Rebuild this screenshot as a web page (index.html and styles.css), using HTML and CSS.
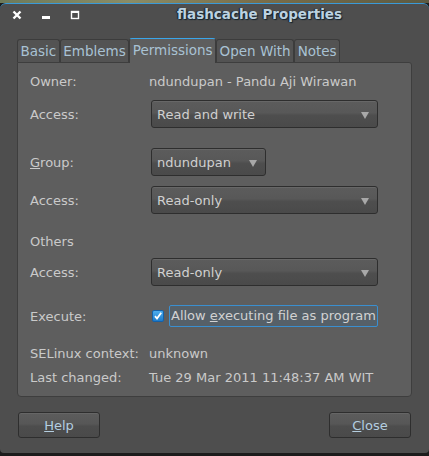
FILE: index.html
```html
<!DOCTYPE html>
<html lang="en-US">

<head>
    <meta charset="UTF-8">
    <meta name="viewport" content="width=device-width, initial-scale=1.0">
    <title>flashcache Properties</title>
    <link rel="stylesheet" href="styles.css">
</head>

<body>
    <div class="wallpaper"></div>
    <div class="window">
        <div class="titlebar">
            <div class="controls">
                <svg class="ctl" width="10" height="10" viewBox="0 0 10 10">
                    <path d="M1.5 1.5 L8.5 8.5 M8.5 1.5 L1.5 8.5" stroke="#fff" stroke-width="2.4" />
                </svg>
                <svg class="ctl" width="10" height="10" viewBox="0 0 10 10">
                    <rect x="1" y="6" width="8" height="3" fill="#fff" />
                </svg>
                <svg class="ctl" width="10" height="10" viewBox="0 0 10 10">
                    <rect x="1.5" y="1.5" width="7" height="7" fill="none" stroke="#fff" stroke-width="1.4" />
                    <rect x="1" y="1" width="8" height="2" fill="#fff" />
                </svg>
            </div>
            <div class="title">flashcache Properties</div>
        </div>

        <div class="tabs">
            <div class="tab">Basic</div>
            <div class="tab">Emblems</div>
            <div class="tab active">Permissions</div>
            <div class="tab">Open With</div>
            <div class="tab">Notes</div>
        </div>

        <div class="panel">
            <div class="row r-owner">
                <span class="label">Owner:</span>
                <span class="value">ndundupan - Pandu Aji Wirawan</span>
            </div>
            <div class="row r-combo r-access1">
                <span class="label">Access:</span>
                <div class="combo wide">Read and write<span class="arrow"></span></div>
            </div>
            <div class="row r-combo r-group">
                <span class="label"><u>G</u>roup:</span>
                <div class="combo narrow">ndundupan<span class="arrow"></span></div>
            </div>
            <div class="row r-combo r-access2">
                <span class="label">Access:</span>
                <div class="combo wide">Read-only<span class="arrow"></span></div>
            </div>
            <div class="row r-others">
                <span class="label">Others</span>
            </div>
            <div class="row r-combo r-access3">
                <span class="label">Access:</span>
                <div class="combo wide">Read-only<span class="arrow"></span></div>
            </div>
            <div class="row r-exec">
                <span class="label">Execute:</span>
                <div class="check">
                    <svg width="12" height="12" viewBox="0 0 12 12">
                        <defs>
                            <linearGradient id="cb" x1="0" y1="0" x2="0" y2="1">
                                <stop offset="0" stop-color="#4fb0f0" />
                                <stop offset="1" stop-color="#1a78c8" />
                            </linearGradient>
                        </defs>
                        <rect x="0.5" y="0.5" width="11" height="11" rx="1.5" fill="url(#cb)" stroke="#1560a8" />
                        <path d="M3 6.2 L5 8.6 L9.2 2.8" fill="none" stroke="#fff" stroke-width="1.8" />
                    </svg>
                    <span class="focus">Allow <u>e</u>xecuting file as program</span>
                </div>
            </div>
            <div class="row r-selinux">
                <span class="label">SELinux context:</span>
                <span class="value">unknown</span>
            </div>
            <div class="row r-changed">
                <span class="label">Last changed:</span>
                <span class="value">Tue 29 Mar 2011 11:48:37 AM WIT</span>
            </div>
        </div>

        <div class="buttons">
            <button class="btn"><u>H</u>elp</button>
            <button class="btn"><u>C</u>lose</button>
        </div>
    </div>
</body>

</html>
```

FILE: styles.css
```css
body {
    margin: 0;
    padding: 0;
    width: 429px;
    height: 456px;
    overflow: hidden;
    background: #1c1c1c;
    font-family: "DejaVu Sans", sans-serif;
    font-size: 13px;
    color: #cacaca;
}

.wallpaper {
    height: 3px;
    background: linear-gradient(to right, #6d7a5a, #8a8c66 30%, #7a6e4a 60%, #5c5a42);
}

.window {
    height: 450px;
    background: #4e4e4e;
    border-top: 1px solid #3a9ad8;
    border-radius: 6px 6px 4px 4px;
    box-sizing: border-box;
    display: flex;
    flex-direction: column;
}

/* title bar */
.titlebar {
    height: 33px;
    display: flex;
    align-items: flex-start;
}

.controls {
    display: flex;
    gap: 19px;
    padding: 6px 0 0 12px;
}

.ctl {
    display: block;
}

.title {
    flex: 1;
    text-align: center;
    padding: 2px 0 0 10px;
    font-weight: bold;
    font-size: 13.5px;
    color: #bcd2e0;
    text-shadow: 1px 1px 1px #14222c, -1px 0 1px #14222c;
}

/* tabs */
.tabs {
    display: flex;
    align-items: flex-end;
    padding-left: 17px;
    height: 25px;
}

.tab {
    height: 22px;
    line-height: 22px;
    padding: 0 2.5px;
    border: 1px solid #3c3c3c;
    border-bottom: none;
    border-radius: 3px 3px 0 0;
    background: #535353;
    color: #a9c2d4;
    font-size: 13.5px;
}

.tab.active {
    height: 24px;
    line-height: 22px;
    background: #5e5e5e;
    border-top: 1px solid #3aa6ea;
    margin-bottom: -1px;
    position: relative;
}

/* panel */
.panel {
    margin: 0 17px;
    height: 335px;
    box-sizing: border-box;
    background: #5e5e5e;
    border: 1px solid #3e3e3e;
    border-radius: 0 3px 4px 4px;
    padding: 8px 12px 0 12px;
}

.row {
    display: flex;
    align-items: center;
    height: 20px;
}

.label {
    width: 119px;
    flex-shrink: 0;
}

.r-combo {
    height: 28px;
}

.r-access1 { margin-top: 9px; }
.r-group { margin-top: 20px; }
.r-access2 { margin-top: 10px; }
.r-others { margin-top: 17px; }
.r-access3 { margin-top: 7px; }
.r-exec { margin-top: 19px; height: 22px; }
.r-selinux { margin-top: 16px; }
.r-changed { margin-top: 4px; }

.combo {
    margin-left: 2px;
    height: 28px;
    box-sizing: border-box;
    border: 1px solid #2e2e2e;
    border-radius: 3px;
    background: linear-gradient(to bottom, #5c5c5c, #585858 45%, #4e4e4e 55%, #4a4a4a);
    box-shadow: inset 0 1px 0 #676767;
    display: flex;
    align-items: center;
    padding-left: 5px;
    position: relative;
    color: #d0d0d0;
}

.combo.wide {
    width: 227px;
}

.combo.narrow {
    width: 115px;
}

.arrow {
    position: absolute;
    right: 8px;
    top: 11px;
    width: 0;
    height: 0;
    border-left: 4px solid transparent;
    border-right: 4px solid transparent;
    border-top: 7px solid #a8a8a8;
}

.check {
    display: flex;
    align-items: center;
    margin-left: 3px;
}

.check svg {
    display: block;
}

.focus {
    margin-left: 5px;
    height: 22px;
    line-height: 20px;
    box-sizing: border-box;
    border: 1px solid #3a8fd0;
    border-radius: 2px;
    background: #566068;
    padding: 0 1px;
    color: #d2d2d2;
}

/* buttons */
.buttons {
    display: flex;
    justify-content: space-between;
    padding: 15px 18px 0 18px;
}

.btn {
    width: 82px;
    height: 26px;
    border: 1px solid #2e2e2e;
    border-radius: 3px;
    background: linear-gradient(to bottom, #5c5c5c, #575757 45%, #4d4d4d 55%, #4a4a4a);
    box-shadow: inset 0 1px 0 #666;
    font-family: "DejaVu Sans", sans-serif;
    font-size: 13px;
    color: #b4cee0;
    padding: 0;
}
```
